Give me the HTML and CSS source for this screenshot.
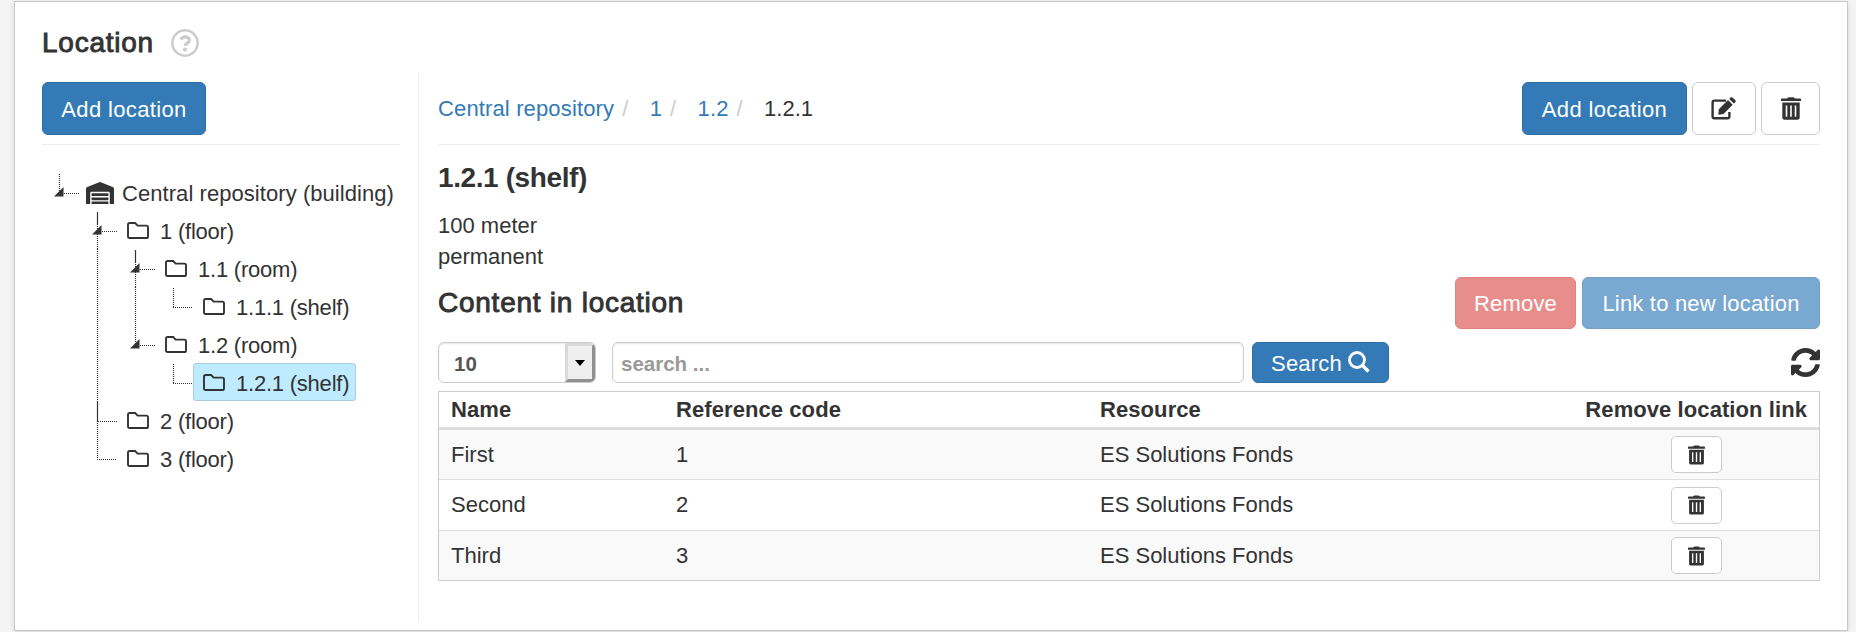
FILE: index.html
```html
<!DOCTYPE html>
<html lang="en">
<head>
<meta charset="utf-8">
<title>Location</title>
<link rel="stylesheet" href="styles.css">
</head>
<body>
<svg class="defs" width="0" height="0" aria-hidden="true">
  <symbol id="folder" viewBox="0 0 22 17"><path d="M1 3V2.6Q1 1 2.6 1H8.2L10.6 3.6H19.4Q21 3.6 21 5.2V14.4Q21 16 19.4 16H2.6Q1 16 1 14.4Z" fill="none" stroke="currentColor" stroke-width="1.9"/></symbol>
  <symbol id="trash" viewBox="0 0 20 23"><path d="M0 2.3Q0 1.4 1 1.4H6L7.4 .3H12.6L14 1.4H19Q20 1.4 20 2.3V4.1H0Z" fill="currentColor"/><path fill-rule="evenodd" d="M1.3 5.4H18.7V20.8Q18.7 22.7 16.500 22.700H3.500Q1.300 22.700 1.300 20.800ZM4.700 8.400V19.800H6.300V8.400ZM9.200 8.400V19.800H10.800V8.400ZM13.700 8.400V19.800H15.300V8.400Z" fill="currentColor"/></symbol>
  <symbol id="arrow" viewBox="0 0 10 10"><path d="M0 9.500L9.500 0V9.500Z" fill="#333"/></symbol>
</svg>
<main class="panel">
  <header class="title-row">
    <h1 class="heading medium">Location</h1>
    <svg class="help" viewBox="0 0 28 28"><circle cx="14" cy="14" r="12.7" fill="none" stroke="#ccc" stroke-width="2.500"/><path d="M9.900 10.600Q11.200 7.900 14.200 7.900Q18.300 8.200 18.300 11.200Q18.300 13 16.200 14.200Q14.200 15.300 14.200 17" fill="none" stroke="#ccc" stroke-width="3.300"/><circle cx="14" cy="20.600" r="2.100" fill="#ccc"/></svg>
  </header>
  <div class="columns">
    <aside class="side">
      <div class="toolbar"><button class="btn primary add">Add location</button></div>
      <div class="tree">
        <div class="node"><svg class="guide" width="37" height="38"><path class="dots" d="M17.500 1V21M22 20.500H37"/><use href="#arrow" x="12" y="14" width="10" height="10"/></svg><span class="anchor root"><svg class="house" viewBox="0 0 640 512"><path fill="currentColor" d="M504 352H136.400c-4.400 0-8 3.600-8 8l-.1 48c0 4.400 3.600 8 8 8H504c4.400 0 8-3.600 8-8v-48c0-4.400-3.600-8-8-8zm0 96H136.100c-4.400 0-8 3.600-8 8l-.1 48c0 4.400 3.600 8 8 8h368c4.400 0 8-3.600 8-8v-48c0-4.400-3.600-8-8-8zm0-192H136.600c-4.400 0-8 3.600-8 8l-.1 48c0 4.400 3.600 8 8 8H504c4.400 0 8-3.600 8-8v-48c0-4.400-3.600-8-8-8zm106.500-139L338.400 3.700a48.150 48.150 0 0 0-36.900 0L29.500 117C11.700 124.500 0 141.900 0 161.300V504c0 4.400 3.600 8 8 8h80c4.400 0 8-3.600 8-8V256c0-17.600 14.600-32 32.600-32h382.800c18 0 32.600 14.400 32.600 32v248c0 4.400 3.600 8 8 8h80c4.400 0 8-3.600 8-8V161.300c0-19.400-11.700-36.800-29.500-44.300z"/></svg>Central repository (building)</span></div>
        <div class="node"><svg class="guide" width="75" height="38"><path class="dots" d="M55.500 1V38M60 20.500H75"/><path class="dots" d="M55.500 2V14"/><use href="#arrow" x="50" y="14" width="10" height="10"/></svg><span class="anchor"><svg class="folder"><use href="#folder"/></svg>1 (floor)</span></div>
        <div class="node"><svg class="guide" width="113" height="38"><path class="dots" d="M55.500 0V38M93.500 1V38M98 20.500H113"/><path class="dots" d="M93.500 2V14"/><use href="#arrow" x="88" y="14" width="10" height="10"/></svg><span class="anchor"><svg class="folder"><use href="#folder"/></svg>1.1 (room)</span></div>
        <div class="node"><svg class="guide" width="151" height="38"><path class="dots" d="M55.500 0V38M93.500 0V38M131.500 1V20M131 20.500H151"/></svg><span class="anchor"><svg class="folder"><use href="#folder"/></svg>1.1.1 (shelf)</span></div>
        <div class="node"><svg class="guide" width="113" height="38"><path class="dots" d="M55.500 0V38M93.500 0V20M98 20.500H113"/><use href="#arrow" x="88" y="14" width="10" height="10"/></svg><span class="anchor"><svg class="folder"><use href="#folder"/></svg>1.2 (room)</span></div>
        <div class="node"><svg class="guide" width="151" height="38"><path class="dots" d="M55.500 0V38M131.500 1V20M131 20.500H151"/></svg><span class="anchor selected"><svg class="folder"><use href="#folder"/></svg>1.2.1 (shelf)</span></div>
        <div class="node"><svg class="guide" width="75" height="38"><path class="dots" d="M55.500 0V38M56 20.500H75"/><path class="dots" d="M55.500 1V20"/></svg><span class="anchor"><svg class="folder"><use href="#folder"/></svg>2 (floor)</span></div>
        <div class="node"><svg class="guide" width="75" height="38"><path class="dots" d="M55.500 0V20M55 20.500H75"/></svg><span class="anchor"><svg class="folder"><use href="#folder"/></svg>3 (floor)</span></div>
      </div>
    </aside>
    <section class="content">
      <div class="toolbar">
        <nav class="crumbs"><a>Central repository</a><i>/</i><a>1</a><i>/</i><a>1.2</a><i>/</i><span>1.2.1</span></nav>
        <button class="btn primary add">Add location</button>
        <button class="btn plain edit"><svg width="26" height="23" viewBox="0 0 26 23"><path d="M15 3.600H3.200Q1.600 3.600 1.600 5.200V19.600Q1.600 21.200 3.200 21.200H16.800Q18.400 21.200 18.400 19.600V15" fill="none" stroke="currentColor" stroke-width="2.400"/><path d="M7.800 12.300L17 3.100L21.700 7.800L12.500 17L7.300 17.700ZM18.200 1.900L19.600 .6Q20.700-.3 21.800.7L24.300 3.200Q25.200 4.200 24.300 5.300L22.900 6.600Z" fill="currentColor"/></svg></button>
        <button class="btn plain bin"><svg width="20" height="23"><use href="#trash"/></svg></button>
      </div>
      <h2 class="heading shelf">1.2.1 (shelf)</h2>
      <p class="facts">100 meter<br>permanent</p>
      <div class="subhead">
        <h2 class="heading medium">Content in location</h2>
        <button class="btn danger faded">Remove</button>
        <button class="btn primary faded link">Link to new location</button>
      </div>
      <div class="filters">
        <div class="select"><span>10</span><b class="drop"><svg width="10" height="6"><path d="M0 0H10L5 6Z"/></svg></b></div>
        <input class="search" placeholder="search ...">
        <button class="btn primary find">Search <svg width="22" height="22" viewBox="0 0 22 22"><circle cx="9" cy="9" r="7.500" fill="none" stroke="currentColor" stroke-width="2.800"/><path d="M14.400 14.400L20.500 20.500" stroke="currentColor" stroke-width="3.400"/></svg></button>
        <svg class="refresh" viewBox="8 8 496 496"><path fill="currentColor" d="M370.720 133.280C339.458 104.008 298.888 87.962 255.848 88c-77.458.068-144.328 53.178-162.791 126.850-1.344 5.363-6.122 9.150-11.651 9.150H24.103c-7.498 0-13.194-6.807-11.807-14.176C33.933 94.924 134.813 8 256 8c66.448 0 126.791 26.136 171.315 68.685L463.030 40.970C478.149 25.851 504 36.559 504 57.941V192c0 13.255-10.745 24-24 24H345.941c-21.382 0-32.090-25.851-16.971-40.971l41.750-41.749zM32 296h134.059c21.382 0 32.090 25.851 16.971 40.971l-41.750 41.750c31.262 29.273 71.835 45.319 114.876 45.280 77.418-.070 144.315-53.144 162.787-126.849 1.344-5.363 6.122-9.150 11.651-9.150h57.304c7.498 0 13.194 6.807 11.807 14.176C478.067 417.076 377.187 504 256 504c-66.448 0-126.791-26.136-171.315-68.685L48.970 471.030C33.851 486.149 8 475.441 8 454.059V320c0-13.255 10.745-24 24-24z"/></svg>
      </div>
      <table class="grid">
        <colgroup><col class="c1"><col class="c2"><col class="c3"><col class="c4"></colgroup>
        <thead><tr><th>Name</th><th>Reference code</th><th>Resource</th><th class="act">Remove location link</th></tr></thead>
        <tbody>
          <tr><td>First</td><td>1</td><td>ES Solutions Fonds</td><td class="act"><button class="btn plain small"><svg width="17" height="20"><use href="#trash"/></svg></button></td></tr>
          <tr><td>Second</td><td>2</td><td>ES Solutions Fonds</td><td class="act"><button class="btn plain small"><svg width="17" height="20"><use href="#trash"/></svg></button></td></tr>
          <tr><td>Third</td><td>3</td><td>ES Solutions Fonds</td><td class="act"><button class="btn plain small"><svg width="17" height="20"><use href="#trash"/></svg></button></td></tr>
        </tbody>
      </table>
    </section>
  </div>
</main>
</body>
</html>
```
FILE: styles.css
```css
* { box-sizing: border-box; }
body {
  margin: 0;
  padding: 1px 8px 1px 14px;
  background: #f4f4f4;
  color: #333;
  font: 22px/31px "Liberation Sans", Arial, sans-serif;
  overflow: hidden;
}
svg { display: block; flex: none; }
.defs { position: absolute; }
.panel {
  height: 630px;
  padding: 26px 27px 0;
  background: #fff;
  border: 1px solid #c8c8c8;
  box-shadow: 0 2px 6px rgba(0, 0, 0, .12);
}
.title-row { display: flex; align-items: center; gap: 17px; height: 29px; }
.heading { margin: 0; font-size: 28px; line-height: 30px; font-weight: bold; letter-spacing: -.4px; }
.medium { font-weight: normal; letter-spacing: .75px; -webkit-text-stroke: .9px #333; }
.help { width: 28px; height: 28px; }
.columns { display: flex; margin-top: 16px; }
.side { width: 377px; height: 549px; padding: 9px 18px 0 0; border-right: 1px solid #eee; }
.content { flex: 1; padding: 9px 0 0 19px; min-width: 0; }
.toolbar { display: flex; gap: 5px; height: 63px; border-bottom: 1px solid #eee; }

.btn {
  display: flex;
  align-items: center;
  justify-content: center;
  width: 165px;
  height: 53px;
  padding: 0;
  border: 1px solid #2e6da4;
  border-radius: 6px;
  font: inherit;
  letter-spacing: .2px;
  white-space: nowrap;
  color: #fff;
}
.add { padding-top: 2px; letter-spacing: .35px; }
.side .btn { width: 164px; }
.primary { background: #337ab7; }
.faded { height: 52px; opacity: .65; }
.danger { width: 121px; background: #db534f; border-color: #d43f3a; }
.link { width: 238px; }
.plain { background: #fff; border-color: #ccc; color: #333; }
.edit { width: 64px; }
.bin { width: 59px; }

.tree { padding-top: 28px; }
.node { display: flex; height: 38px; }
.anchor {
  display: flex;
  align-items: center;
  gap: 11px;
  height: 38px;
  padding: 2px 6px 0 9px;
  border: 1px solid transparent;
  white-space: nowrap;
  letter-spacing: -.22px;
}
.root { gap: 8px; padding-left: 6px; letter-spacing: .06px; }
.selected { background: #beebff; border-color: #a9cfdf; border-radius: 3px; }
.folder { width: 22px; height: 17px; margin-bottom: 1px; }
.house { width: 28px; height: 22.4px; }
.dots { fill: none; stroke: #333; stroke-width: 1.2; stroke-dasharray: 1 1; }

.crumbs { display: flex; flex: 1; padding-top: 11px; }
.crumbs a { color: #337ab7; letter-spacing: .14px; }
.crumbs i { width: 35.5px; padding-left: 8px; color: #ccc; font-style: normal; }
.shelf { margin-top: 18px; }
.facts { margin: 17px 0 0; }
.subhead { display: flex; gap: 6px; height: 52px; margin-top: 5px; }
.subhead .heading { flex: 1; padding-top: 11px; }

.filters { display: flex; align-items: center; height: 41px; margin-top: 13px; }
.select {
  display: flex;
  width: 158px;
  height: 41px;
  padding-left: 15px;
  border: 1px solid #ccc;
  border-radius: 6px;
  overflow: hidden;
  box-shadow: inset 0 1px 2px rgba(0, 0, 0, .1);
  color: #555;
  font-weight: bold;
  font-size: 20.500px;
  line-height: 42px;
}
.select span { flex: 1; }
.drop {
  display: grid;
  place-items: center;
  width: 30px;
  border: 3px solid;
  border-color: #d9d9d9 #909090 #909090 #d9d9d9;
  background: #efefef;
  color: #000;
}
.search {
  width: 632px;
  height: 41px;
  margin: 0 8px 0 16px;
  padding: 3px 8px 0;
  border: 1px solid #ccc;
  border-radius: 6px;
  box-shadow: inset 0 1px 2px rgba(0, 0, 0, .1);
  font: bold 20.500px/24px "Liberation Sans", Arial, sans-serif;
}
.search::placeholder { color: #999; opacity: 1; }
.find { width: 137px; height: 41px; gap: 6px; padding-top: 1px; }
.find svg { margin-top: -2px; }
.refresh { width: 29px; height: 29px; margin-left: auto; }

.grid {
  width: 100%;
  height: 190px;
  margin-top: 8px;
  border: 1px solid #ccc;
  border-collapse: separate;
  border-spacing: 0;
  table-layout: fixed;
}
.c1 { width: 225px; }
.c2 { width: 424px; }
.c3 { width: 484px; }
.grid th { height: 38px; padding: 1px 12px 0; border-bottom: 3px solid #ddd; text-align: left; line-height: 34px; letter-spacing: .08px; }
.grid td { height: 50px; padding: 0 12px; border-top: 1px solid #ddd; line-height: 30px; }
.grid tbody tr:first-child td { height: 49px; border-top: 0; }
.grid tbody tr:nth-child(2) td { height: 51px; }
.grid tbody tr:nth-child(odd) { background: #f9f9f9; }
.grid th.act { text-align: right; white-space: nowrap; }
.grid td.act { padding-left: 13px; padding-right: 11px; }
.small { width: 51px; height: 37px; margin: 0 auto; border-radius: 5px; }
```
